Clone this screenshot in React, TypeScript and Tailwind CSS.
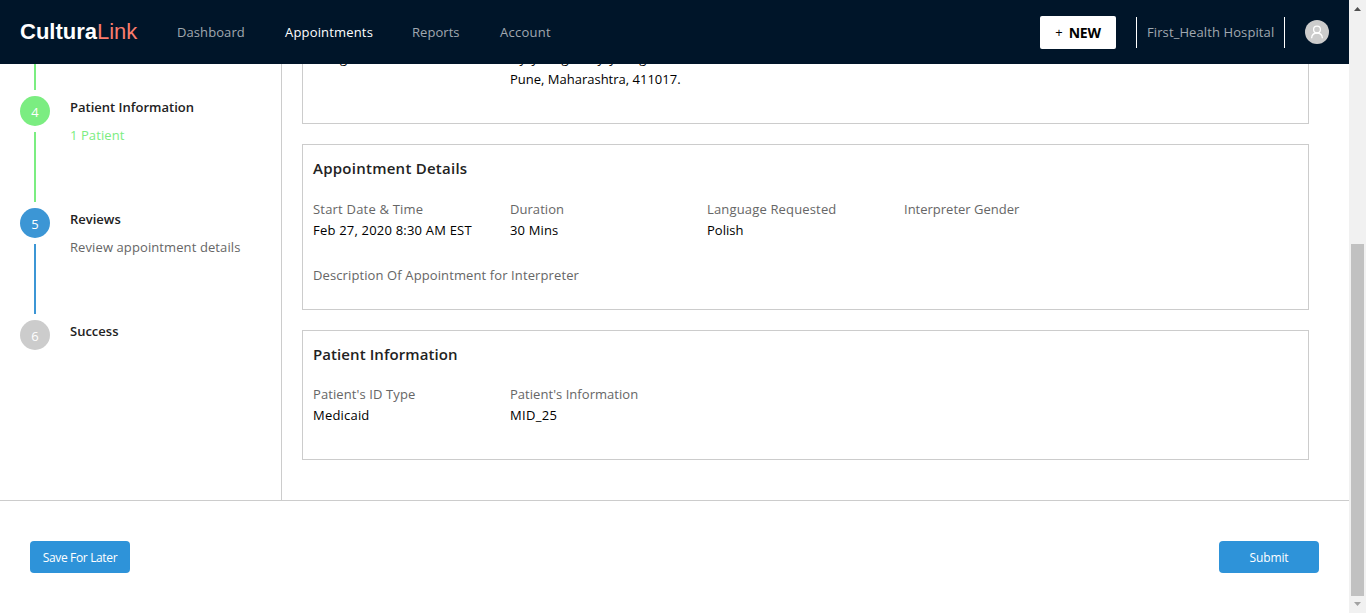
import React from "react";

const steps = [
  { n: 4, title: "Patient Information", note: "1 Patient", dot: "bg-[#7bed81]", line: "bg-[#7bed81]", noteCls: "text-[#7bed81] tracking-[0.08px]" },
  { n: 5, title: "Reviews", note: "Review appointment details", dot: "bg-[#3c96d5]", line: "bg-[#3c96d5]", noteCls: "text-[#666] tracking-[0.1px]" },
  { n: 6, title: "Success", note: "", dot: "bg-[#ccc]", line: "", noteCls: "" },
];

type FieldProps = { label: string; value?: string; labelCls?: string; valueCls?: string };

function Field({ label, value, labelCls = "", valueCls = "" }: FieldProps) {
  return (
    <div className="w-[197px] shrink-0 whitespace-nowrap text-[13px] leading-[21px]">
      <div className={`text-[#666] ${labelCls}`}>{label}</div>
      <div className={`h-[21px] text-black ${valueCls}`}>{value}</div>
    </div>
  );
}

function Avatar() {
  return (
    <svg className="mr-5 h-6 w-6" viewBox="0 0 24 24" fill="none">
      <circle cx="12" cy="12" r="12" fill="#ccc" />
      <circle cx="12" cy="9.6" r="3.4" stroke="#fff" strokeWidth="1.3" />
      <path d="M6.6 18.2C6.8 15.2 9 13 12 13s5.200 2.200 5.400 5.200" stroke="#fff" strokeWidth="1.3" />
    </svg>
  );
}

export default function App() {
  return (
    <div className="flex h-[613px] w-[1366px] overflow-hidden bg-white font-['Open_Sans',sans-serif]">
      <div className="flex w-[1349px] flex-col">
        <header className="flex h-16 shrink-0 items-center bg-[#001529] text-[13px] text-[#a0a8b0]">
          <div className="ml-5 w-[157px] pb-0.5 font-['Liberation_Sans',sans-serif] text-[22px] text-[#f97c6d]">
            <b className="text-white">Cultura</b>Link
          </div>
          <span className="w-[108px] pt-0.5 tracking-[0.08px]">Dashboard</span>
          <span className="w-[127px] pt-0.5 tracking-[0.17px] text-white">Appointments</span>
          <span className="w-[88px] pt-0.5 tracking-[0.05px]">Reports</span>
          <span className="pt-0.5 tracking-[0.25px]">Account</span>
          <button className="ml-auto flex h-[33px] w-[76px] items-center justify-center gap-1.5 rounded-[2px] bg-white pt-px text-black">
            <span className="pt-px">+</span>
            <span className="text-[14px] leading-5 font-bold tracking-[-0.2px]">NEW</span>
          </button>
          <div className="mx-5 flex h-[31px] w-[149px] items-center whitespace-nowrap border-x border-white pt-0.5 pl-2.5 tracking-[0.1px]">
            First_Health Hospital
          </div>
          <Avatar />
        </header>

        <div className="flex h-[437px] shrink-0 border-b border-[#ccc]">
          <aside className="w-[282px] border-r border-[#ccc] pl-5">
            <div className="ml-3.5 h-[26px] w-0.5 bg-[#7bed81]" />
            {steps.map((s) => (
              <div key={s.n} className="flex h-[112px] gap-5 pt-1.5">
                <div className="flex flex-col items-center gap-1.5">
                  <div className={`flex h-[30px] w-[30px] items-center justify-center rounded-full pt-[3px] text-[13px] text-white ${s.dot}`}>
                    {s.n}
                  </div>
                  {s.line && <div className={`h-[70px] w-0.5 ${s.line}`} />}
                </div>
                <div className="text-[13px] leading-[22px]">
                  <div className="font-semibold text-[#222]">{s.title}</div>
                  <div className={`mt-1.5 ${s.noteCls}`}>{s.note}</div>
                </div>
              </div>
            ))}
          </aside>

          <main className="flex flex-1 flex-col gap-5 pl-5 pr-10">
            <section className="flex h-[60px] flex-col overflow-hidden border border-t-0 border-[#ccc] px-2.5 text-[13px] leading-[21px]">
              <div className="-mt-4 flex text-black">
                <div className="w-[197px]">Being</div>
                <div>
                  Hyryhoog to Hyryhoog
                  <br />
                  Pune, Maharashtra, 411017.
                </div>
              </div>
            </section>

            <section className="h-[166px] border border-[#ccc] px-2.5 pt-[11px]">
              <h2 className="text-[15px] font-semibold leading-6 tracking-[0.25px] text-[#222]">Appointment Details</h2>
              <div className="mt-[19px] flex">
                <Field label="Start Date & Time" value="Feb 27, 2020 8:30 AM EST" labelCls="tracking-[0.2px]" valueCls="tracking-[0.2px]" />
                <Field label="Duration" value="30 Mins" labelCls="tracking-[0.05px]" valueCls="tracking-[0.15px]" />
                <Field label="Language Requested" value="Polish" labelCls="tracking-[0.16px]" />
                <Field label="Interpreter Gender" />
              </div>
              <div className="mt-6 flex">
                <Field label="Description Of Appointment for Interpreter" labelCls="tracking-[0.11px]" />
              </div>
            </section>

            <section className="h-[130px] border border-[#ccc] px-2.5 pt-[11px]">
              <h2 className="text-[15px] font-semibold leading-6 tracking-[0.08px] text-[#222]">Patient Information</h2>
              <div className="mt-[18px] flex">
                <Field label="Patient's ID Type" value="Medicaid" labelCls="tracking-[0.1px]" valueCls="tracking-[0.2px]" />
                <Field label="Patient's Information" value="MID_25" labelCls="tracking-[0.04px]" valueCls="tracking-[0.3px]" />
              </div>
            </section>
          </main>
        </div>

        <footer className="flex justify-between px-[30px] pt-10">
          <button className="h-8 w-[100px] rounded bg-[#2e93d9] pt-0.5 text-[12px] tracking-[-0.35px] text-white">Save For Later</button>
          <button className="h-8 w-[100px] rounded bg-[#2e93d9] pt-0.5 text-[12px] tracking-[-0.1px] text-white">Submit</button>
        </footer>
      </div>

      <div className="flex w-[17px] flex-col items-center bg-[#f1f1f1]">
        <svg className="h-[244px] w-[17px] shrink-0" viewBox="0 0 17 244">
          <path d="M5 11h7L8.500 7z" fill="#505050" />
        </svg>
        <div className="h-[352px] w-[13px] bg-[#c1c1c1]" />
        <svg className="h-[17px] w-[17px]" viewBox="0 0 17 17">
          <path d="M5 6h7L8.500 10z" fill="#a3a3a3" />
        </svg>
      </div>
    </div>
  );
}
